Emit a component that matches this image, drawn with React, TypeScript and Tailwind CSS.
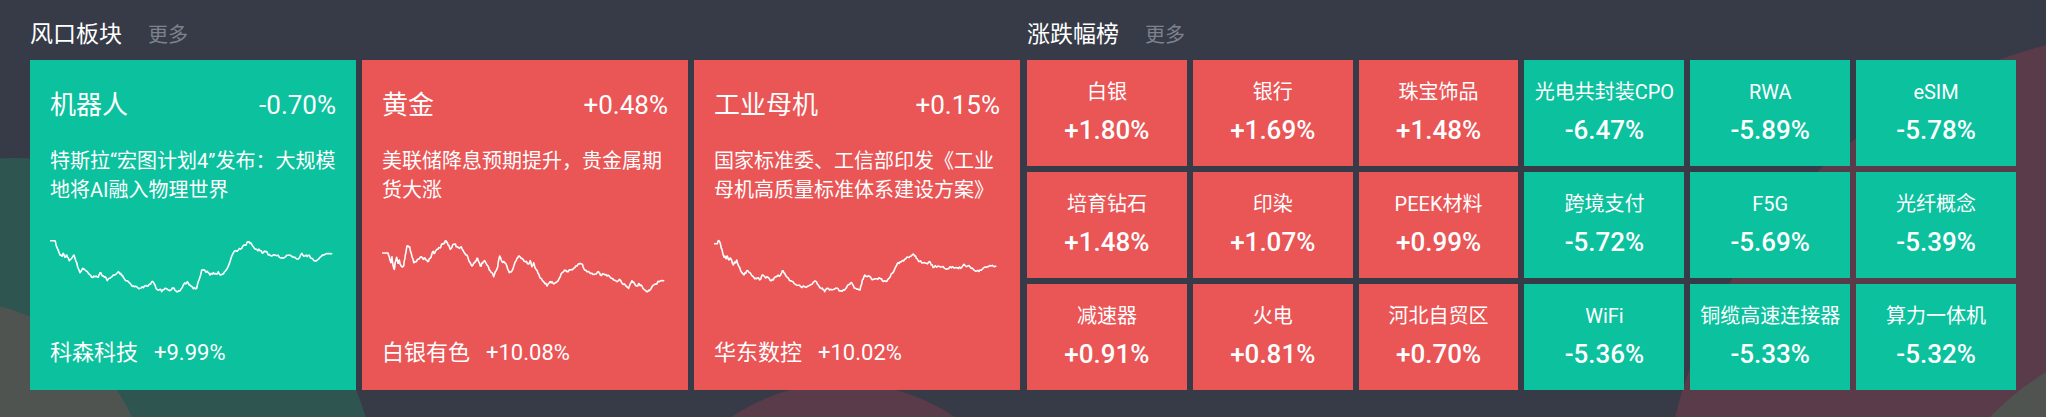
import React from "react";

type Pt = [number, number];

const chart1: Pt[] = [[60,62],[75,62],[80,80],[88,100],[95,108],[100,100],[105,112],[110,105],[118,122],[125,115],[132,105],[140,128],[150,158],[158,145],[165,150],[175,160],[185,172],[195,170],[205,172],[210,158],[218,168],[225,170],[232,182],[240,175],[250,165],[265,155],[272,160],[280,172],[290,182],[300,190],[310,198],[320,200],[330,205],[340,203],[345,198],[355,197],[365,185],[372,190],[378,205],[390,208],[395,215],[405,205],[415,210],[425,208],[432,204],[440,215],[450,213],[460,195],[472,185],[480,195],[490,206],[500,205],[507,180],[515,150],[525,152],[535,158],[540,165],[550,158],[560,162],[565,155],[572,165],[580,162],[590,148],[600,125],[612,95],[625,90],[635,85],[645,75],[655,65],[662,68],[670,80],[680,88],[690,92],[700,98],[708,95],[715,105],[725,108],[745,106],[755,113],[765,112],[775,106],[790,112],[805,117],[815,100],[825,108],[835,106],[845,115],[855,122],[862,120],[875,108],[885,103],[905,101]];

const chart2: Pt[] = [[60,99],[78,99],[82,110],[87,128],[90,110],[93,135],[97,148],[100,125],[104,112],[108,130],[112,120],[116,135],[120,140],[125,138],[130,105],[135,78],[143,80],[148,100],[155,128],[160,125],[170,118],[178,110],[185,118],[190,115],[197,125],[205,115],[212,95],[218,100],[225,88],[233,83],[238,75],[245,70],[252,62],[258,75],[265,88],[272,75],[278,72],[285,80],[292,85],[298,80],[305,95],[315,105],[322,125],[330,138],[338,128],[345,115],[350,125],[355,138],[362,130],[368,122],[375,135],[382,150],[390,158],[395,170],[400,155],[407,140],[413,108],[420,125],[428,128],[435,140],[442,158],[450,152],[458,130],[465,115],[472,108],[480,115],[490,125],[500,132],[505,122],[510,140],[515,128],[520,145],[528,160],[535,175],[545,185],[555,198],[562,188],[570,185],[578,190],[585,185],[595,170],[600,158],[608,150],[615,155],[625,150],[635,145],[645,138],[652,132],[660,132],[665,145],[675,155],[690,160],[700,162],[710,155],[715,165],[725,162],[735,168],[745,172],[755,180],[765,185],[772,178],[780,190],[790,195],[800,205],[810,182],[818,192],[825,198],[832,192],[840,198],[848,210],[855,215],[862,212],[870,200],[880,192],[892,185],[905,182]];

const chart3: Pt[] = [[58,71],[70,71],[75,62],[82,85],[88,105],[95,115],[100,108],[105,120],[110,115],[118,135],[128,120],[135,140],[142,155],[150,165],[158,152],[168,158],[175,168],[182,176],[190,174],[200,178],[205,165],[212,170],[222,172],[232,182],[240,175],[250,168],[258,168],[265,152],[272,160],[280,172],[290,182],[300,190],[310,196],[320,200],[332,200],[345,197],[355,192],[363,183],[370,192],[378,203],[385,204],[392,215],[400,205],[410,208],[420,208],[428,205],[435,212],[445,214],[455,205],[462,195],[470,188],[478,197],[488,208],[498,210],[505,180],[512,165],[520,170],[530,172],[538,178],[548,176],[558,175],[565,182],[575,184],[585,175],[595,160],[605,140],[612,128],[622,125],[632,118],[642,112],[652,108],[660,104],[667,115],[675,125],[688,128],[698,130],[705,125],[712,135],[720,142],[732,138],[745,140],[752,145],[765,145],[775,140],[790,143],[800,145],[810,133],[818,140],[828,140],[838,148],[848,153],[858,150],[870,143],[880,140],[890,138],[905,139]];

function buildPath(pts: Pt[], seed: number): string {
  let s = seed;
  const rnd = () => {
    s = (s * 9301 + 49297) % 233280;
    return s / 233280;
  };
  const out: string[] = [];
  for (let i = 0; i < pts.length; i++) {
    const [zx, zy] = pts[i];
    const x = zx / 3 - 20;
    const y = zy / 3 - 10;
    out.push(`${i === 0 ? "M" : "L"}${x.toFixed(1)} ${y.toFixed(1)}`);
    if (i < pts.length - 1 && i > 0) {
      const [nx, ny] = pts[i + 1];
      const x2 = nx / 3 - 20;
      const y2 = ny / 3 - 10;
      for (let k = 1; k <= 2; k++) {
        const t = k / 3;
        const jx = x + (x2 - x) * t;
        const jy = y + (y2 - y) * t + (rnd() - 0.5) * 2.4;
        out.push(`L${jx.toFixed(1)} ${jy.toFixed(1)}`);
      }
    }
  }
  return out.join(" ");
}

function Spark({ pts, seed }: { pts: Pt[]; seed: number }) {
  return (
    <svg width="286" height="70" viewBox="0 0 286 70" className="block">
      <path d={buildPath(pts, seed)} fill="none" stroke="#ffffff" strokeWidth="1.6" strokeLinejoin="round" strokeLinecap="round" />
    </svg>
  );
}

const cards = [
  {
    name: "机器人",
    pct: "-0.70%",
    desc: "特斯拉“宏图计划4”发布：大规模地将AI融入物理世界",
    stock: "科森科技",
    stockPct: "+9.99%",
    up: false,
    pts: chart1,
  },
  {
    name: "黄金",
    pct: "+0.48%",
    desc: "美联储降息预期提升，贵金属期货大涨",
    stock: "白银有色",
    stockPct: "+10.08%",
    up: true,
    pts: chart2,
  },
  {
    name: "工业母机",
    pct: "+0.15%",
    desc: "国家标准委、工信部印发《工业母机高质量标准体系建设方案》",
    stock: "华东数控",
    stockPct: "+10.02%",
    up: true,
    pts: chart3,
  },
];

const tiles = [
  { name: "白银", pct: "+1.80%", up: true },
  { name: "银行", pct: "+1.69%", up: true },
  { name: "珠宝饰品", pct: "+1.48%", up: true },
  { name: "光电共封装CPO", pct: "-6.47%", up: false },
  { name: "RWA", pct: "-5.89%", up: false },
  { name: "eSIM", pct: "-5.78%", up: false },
  { name: "培育钻石", pct: "+1.48%", up: true },
  { name: "印染", pct: "+1.07%", up: true },
  { name: "PEEK材料", pct: "+0.99%", up: true },
  { name: "跨境支付", pct: "-5.72%", up: false },
  { name: "F5G", pct: "-5.69%", up: false },
  { name: "光纤概念", pct: "-5.39%", up: false },
  { name: "减速器", pct: "+0.91%", up: true },
  { name: "火电", pct: "+0.81%", up: true },
  { name: "河北自贸区", pct: "+0.70%", up: true },
  { name: "WiFi", pct: "-5.36%", up: false },
  { name: "铜缆高速连接器", pct: "-5.33%", up: false },
  { name: "算力一体机", pct: "-5.32%", up: false },
];

function Header({ title }: { title: string }) {
  return (
    <div className="flex h-[60px] items-center gap-[26px] pt-[10px]">
      <span className="text-[23px] leading-[28px] text-white">{title}</span>
      <span className="text-[20px] leading-[28px] text-[#7d828c]">更多</span>
    </div>
  );
}

export default function App() {
  return (
    <div className="relative h-[417px] w-[2046px] overflow-hidden bg-[#363b47] font-['Roboto','Noto_Sans_CJK_SC',sans-serif]">
      {/* decorative background blobs */}
      <div className="absolute left-[-352px] top-[158px] h-[734px] w-[734px] rounded-full bg-[#2f5550]" />
      <div className="absolute left-[-250px] top-[300px] h-[400px] w-[400px] rounded-full bg-[#4f5450]" />
      <div className="absolute left-[642px] top-[383px] h-[402px] w-[402px] rounded-full bg-[#5a3b4a]" />
      <div className="absolute left-[1660px] top-[30px] h-[1020px] w-[1020px] rounded-full bg-[#5a3b4a]" />
      <div className="absolute left-[1908px] top-[328px] h-[584px] w-[584px] rounded-full bg-[#4f5450]" />

      <div className="relative flex gap-[7px] px-[30px]">
        <section className="w-[990px]">
          <Header title="风口板块" />
          <div className="grid h-[330px] grid-cols-3 gap-[6px]">
            {cards.map((c) => (
              <div
                key={c.name}
                className={`flex flex-col px-[20px] pt-[28px] pb-[22px] text-white ${c.up ? "bg-[#ea5556]" : "bg-[#0bc19e]"}`}
              >
                <div className="flex items-center justify-between leading-[34px]">
                  <span className="text-[26px]">{c.name}</span>
                  <span className="text-[26px]">{c.pct}</span>
                </div>
                <p className="mt-[25px] text-[20px] leading-[29px]">{c.desc}</p>
                <div className="mt-auto">
                  <Spark pts={c.pts} seed={c.name.length * 17 + 3} />
                </div>
                <div className="mt-[38px] flex items-center leading-[30px]">
                  <span className="text-[22px]">{c.stock}</span>
                  <span className="ml-[16px] text-[22px]">{c.stockPct}</span>
                </div>
              </div>
            ))}
          </div>
        </section>
        <section className="w-[989px]">
          <Header title="涨跌幅榜" />
          <div className="grid h-[330px] grid-cols-6 grid-rows-3 gap-[6px]">
            {tiles.map((t, i) => (
              <div
                key={i}
                className={`flex flex-col items-center pt-[18px] text-white ${t.up ? "bg-[#ea5556]" : "bg-[#0bc19e]"}`}
              >
                <span className="whitespace-nowrap text-[20px] leading-[28px]">{t.name}</span>
                <span className="mt-[8px] text-[26px] font-medium leading-[32px]">{t.pct}</span>
              </div>
            ))}
          </div>
        </section>
      </div>
    </div>
  );
}
